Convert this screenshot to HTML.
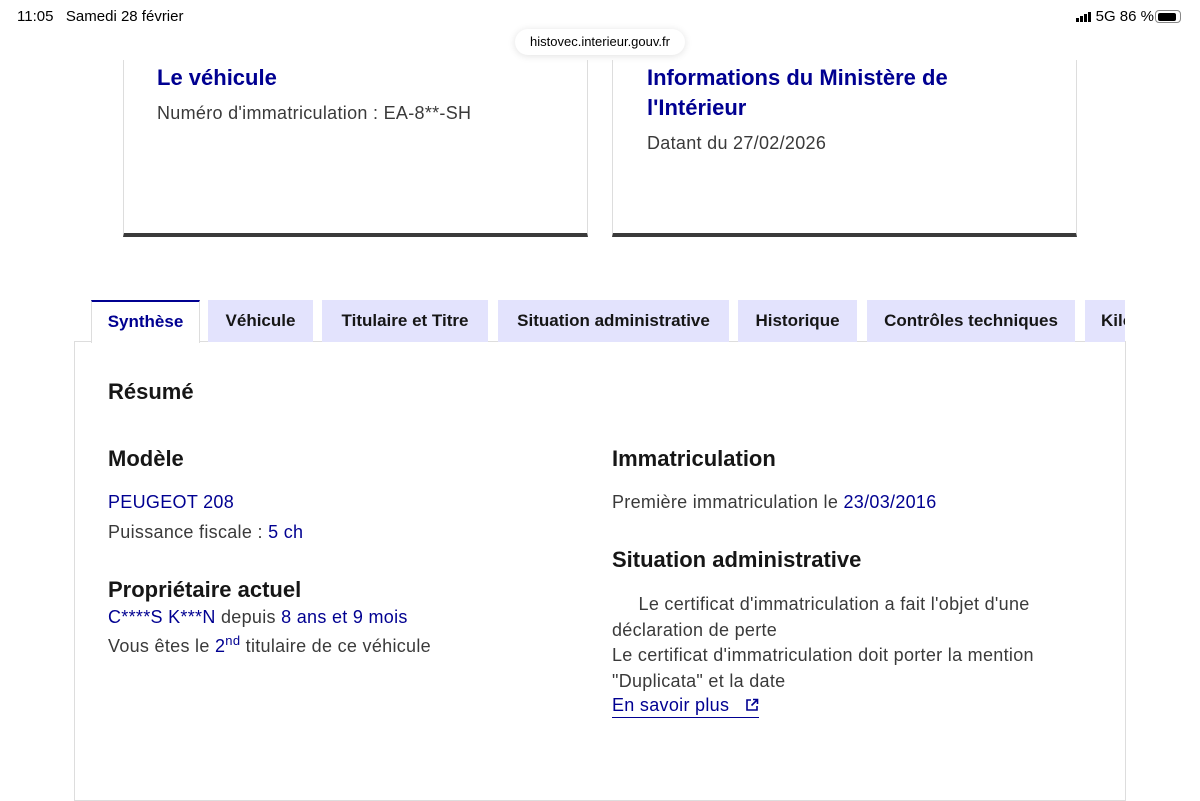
<!DOCTYPE html>
<html><head><meta charset="utf-8"><style>
*{margin:0;padding:0;box-sizing:border-box}
body{width:1200px;height:788px;background:#fff;font-family:"Liberation Sans",sans-serif;color:#3a3a3a;position:relative;overflow:hidden}
.a{position:absolute;white-space:nowrap}
.blue{color:#000091}
.card{position:absolute;top:60px;height:177px;border-left:1px solid #ddd;border-right:1px solid #ddd;border-bottom:4px solid #3a3a3a}
.tab{position:absolute;top:300px;height:42px;background:#e3e3fd;color:#161616;font-weight:bold;font-size:17px;line-height:42px;text-align:center}
h2{position:absolute;font-size:22px;color:#161616;font-weight:bold;white-space:nowrap}
.t{font-size:18px;letter-spacing:0.3px}
</style></head><body>
<div class="a" style="left:17px;top:8px;font-size:15px;color:#000">11:05&nbsp;&nbsp; Samedi 28 février</div>
<div class="a" style="right:46px;top:8px;font-size:15px;color:#000">
<span style="display:inline-block;vertical-align:-1px"><i style="display:inline-block;width:3px;height:4px;background:#000;margin-right:1px"></i><i style="display:inline-block;width:3px;height:6px;background:#000;margin-right:1px"></i><i style="display:inline-block;width:3px;height:8px;background:#000;margin-right:1px"></i><i style="display:inline-block;width:3px;height:10px;background:#000"></i></span> 5G 86 %</div>
<div class="a" style="left:1155px;top:10px;width:26px;height:13px;border:1.5px solid #888;border-radius:4px;padding:1.5px"><div style="width:18px;height:100%;background:#000;border-radius:2px"></div></div>
<div class="a" style="left:515px;top:29px;width:170px;height:26px;background:#fff;border-radius:13px;box-shadow:0 1px 8px rgba(0,0,0,.12);font-size:13px;color:#000;text-align:center;line-height:26px">histovec.interieur.gouv.fr</div>

<div class="card" style="left:123px;width:465px"></div>
<div class="card" style="left:612px;width:465px"></div>
<div class="a blue" style="left:157px;top:65px;font-size:22px;font-weight:bold">Le véhicule</div>
<div class="a t" style="left:157px;top:103px">Numéro d'immatriculation : EA-8**-SH</div>
<div class="a blue" style="left:647px;top:63px;font-size:22px;font-weight:bold;line-height:30px">Informations du Ministère de<br>l'Intérieur</div>
<div class="a t" style="left:647px;top:133px">Datant du 27/02/2026</div>

<div class="a" style="left:74px;top:341px;width:1052px;height:460px;border:1px solid #ddd"></div>
<div class="tab" style="left:91px;width:109px;background:#fff;color:#000091;border-top:2px solid #000091;border-left:1px solid #ddd;border-right:1px solid #ddd;height:43px;line-height:40px">Synthèse</div>
<div class="tab" style="left:208px;width:105px">Véhicule</div>
<div class="tab" style="left:322px;width:166px">Titulaire et Titre</div>
<div class="tab" style="left:498px;width:231px">Situation administrative</div>
<div class="tab" style="left:738px;width:119px">Historique</div>
<div class="tab" style="left:867px;width:208px">Contrôles techniques</div>
<div class="tab" style="left:1085px;width:40px;overflow:hidden;text-align:left;padding-left:16px">Kilo</div>

<h2 style="left:108px;top:379px">Résumé</h2>
<h2 style="left:108px;top:446px">Modèle</h2>
<div class="a t blue" style="left:108px;top:492px">PEUGEOT 208</div>
<div class="a t" style="left:108px;top:522px">Puissance fiscale : <span class="blue">5 ch</span></div>
<h2 style="left:108px;top:577px">Propriétaire actuel</h2>
<div class="a t" style="left:108px;top:607px"><span class="blue">C****S K***N</span> depuis <span class="blue">8 ans et 9 mois</span></div>
<div class="a t" style="left:108px;top:633px">Vous êtes le <span class="blue">2<sup style="font-size:13px">nd</sup></span> titulaire de ce véhicule</div>

<h2 style="left:612px;top:446px">Immatriculation</h2>
<div class="a t" style="left:612px;top:492px">Première immatriculation le <span class="blue">23/03/2016</span></div>
<h2 style="left:612px;top:547px">Situation administrative</h2>
<div class="a t" style="left:612px;top:592px;line-height:25.5px">&nbsp;&nbsp;&nbsp;&nbsp;&nbsp;Le certificat d'immatriculation a fait l'objet d'une<br>déclaration de perte<br>Le certificat d'immatriculation doit porter la mention<br>"Duplicata" et la date</div>
<div class="a t blue" style="left:612px;top:695px;border-bottom:1.5px solid #000091;padding-bottom:1px">En savoir plus &nbsp;&nbsp;<svg width="14" height="14" viewBox="0 0 14 14" style="vertical-align:-1px"><path d="M6 2H2v10h10V8M8 1.5h4.5V6M12.5 1.5L6.5 7.5" fill="none" stroke="#000091" stroke-width="1.6"/></svg></div>
</body></html>
